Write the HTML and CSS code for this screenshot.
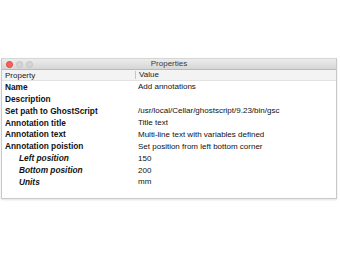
FILE: index.html
```html
<!DOCTYPE html>
<html>
<head>
<meta charset="utf-8">
<link rel="stylesheet" href="styles.css">
</head>
<body>
<div class="window">
  <div class="titlebar">
    <div class="lights">
      <span class="light red"></span>
      <span class="light"></span>
      <span class="light"></span>
    </div>
    <div class="title">Properties</div>
  </div>
  <div class="header">
    <div class="col-prop">Property</div>
    <div class="col-val">Value</div>
  </div>
  <div class="rows">
    <div class="row"><div class="col-prop b">Name</div><div class="col-val">Add annotations</div></div>
    <div class="row"><div class="col-prop b">Description</div><div class="col-val"></div></div>
    <div class="row"><div class="col-prop b">Set path to GhostScript</div><div class="col-val">/usr/local/Cellar/ghostscript/9.23/bin/gsc</div></div>
    <div class="row"><div class="col-prop b">Annotation title</div><div class="col-val">Title text</div></div>
    <div class="row"><div class="col-prop b">Annotation text</div><div class="col-val">Multi-line text with variables defined</div></div>
    <div class="row"><div class="col-prop b">Annotation poistion</div><div class="col-val">Set position from left bottom corner</div></div>
    <div class="row"><div class="col-prop b sub">Left position</div><div class="col-val">150</div></div>
    <div class="row"><div class="col-prop b sub">Bottom position</div><div class="col-val">200</div></div>
    <div class="row"><div class="col-prop b sub">Units</div><div class="col-val">mm</div></div>
  </div>
</div>
</body>
</html>
```
FILE: styles.css
```css
html, body {
  margin: 0;
  padding: 0;
  background: #ffffff;
}
body {
  width: 340px;
  height: 260px;
  overflow: hidden;
  font-family: "Liberation Sans", Arial, sans-serif;
  font-size: 8px;
  color: #111;
}
.window {
  margin: 58px 0 0 1px;
  width: 336px;
  height: 141px;
  border: 1px solid #c9c9c9;
  border-top-color: #d6d6d6;
  background: #fff;
  box-sizing: border-box;
  display: flex;
  flex-direction: column;
  box-shadow: 0 1px 2px rgba(0,0,0,0.12);
}
.titlebar {
  height: 10px;
  background: linear-gradient(#ececec, #d6d6d6);
  border-bottom: 1px solid #b9b9b9;
  display: flex;
  align-items: center;
  position: relative;
}
.lights {
  display: flex;
  gap: 3px;
  padding-left: 4px;
}
.light {
  width: 7px;
  height: 7px;
  border-radius: 50%;
  background: #d5d5d5;
  border: 0.5px solid #c4c4c4;
  box-sizing: border-box;
}
.light.red {
  background: #fc5f57;
  border-color: #e0443e;
}
.title {
  position: absolute;
  left: 0;
  right: 0;
  top: 0;
  text-align: center;
  line-height: 10px;
  font-size: 8px;
  color: #3a3a3a;
}
.header {
  height: 10px;
  display: flex;
  align-items: center;
  background: #f3f3f3;
  border-bottom: 1px solid #e2e2e2;
  font-size: 8px;
  color: #222;
}
.header .col-val {
  border-left: 1px solid #c6c6c6;
  padding-left: 3px;
  height: 8px;
  line-height: 8px;
}
.col-prop {
  width: 133px;
  padding-left: 3px;
  box-sizing: border-box;
  white-space: nowrap;
}
.col-val {
  flex: 1;
  padding-left: 3px;
  white-space: nowrap;
}
.rows {
  display: flex;
  flex-direction: column;
}
.row {
  height: 11.875px;
  display: flex;
  align-items: center;
}
.b {
  font-weight: bold;
  font-size: 8.3px;
}
.sub {
  font-style: italic;
  padding-left: 17px;
}
```
